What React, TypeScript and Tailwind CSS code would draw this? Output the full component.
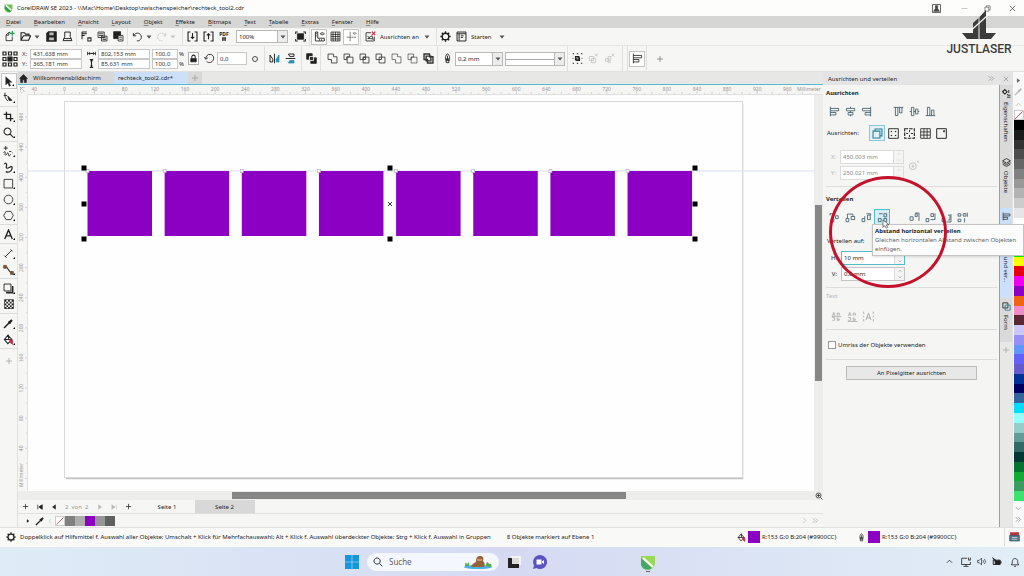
import { ReactNode } from 'react';
import clsx from 'clsx';

const PURPLE = '#8c00c4';

const menus = ['Datei', 'Bearbeiten', 'Ansicht', 'Layout', 'Objekt', 'Effekte', 'Bitmaps', 'Text', 'Tabelle', 'Extras', 'Fenster', 'Hilfe'];

const palette = [
  '#000000', '#1a1a1a', '#333333', '#4d4d4d', '#666666', '#808080', '#999999', '#b3b3b3', '#cccccc', '#e6e6e6',
  '#ffffff', '#0000ff', '#00ffff', '#00ff00', '#ffff00', '#e60012', '#f000f0', '#8c00c4', '#f06414', '#f08cc8',
  '#5a2832', '#ccc8fa', '#9690f5', '#6496fa', '#6460fa', '#645ccd', '#003296', '#00005f', '#32649b', '#00dcfa',
  '#96fffa', '#96cdc8', '#649b96', '#326964', '#003732', '#057332', '#12aa37', '#3c9b64', '#3ce16e',
];

const docPalette = ['#808080', '#adadad', PURPLE, '#969696', '#606060'];

// All glyphs are drawn on a 16 x 16 grid
const glyphs: Record<string, ReactNode> = {
  new: (
    <>
      <path d="M9 2H7L3 6v8h9V8M7 2v4H3" />
      <path d="M12 0v7M8.500 3.500h7" stroke="#1da04a" strokeWidth="1.800" />
    </>
  ),
  open: <path d="M1.500 13.500V2.500h5l1.500 2h5v2.500M1.500 13.500L5 7h10.500l-3 6.500z" strokeWidth="1.600" />,
  save: (
    <>
      <path d="M1 3l2-2h12v14H1z" fill="currentColor" />
      <path d="M5 2h6v4H5zM4.500 9.500h7v4h-7z" fill="#bbb" stroke="none" />
    </>
  ),
  print: <path d="M4 8V1.500h8V8M4 8l-2.500 6h13L12 8M3 11h10" strokeWidth="1.400" />,
  cut: <path d="M1.500 1.500h7M1.500 4h7M1.500 6.500h4M1.500 1v11M10 10h4.500v4.500H10z" strokeWidth="1.500" />,
  copy: <path d="M1.500 1.500h9v8h-9zM3 4h6M3 6.500h6M6.500 7.500h8v7h-8zM8 10h5M8 12.500h5" />,
  paste: (
    <>
      <path d="M1 1h10v10H1z" fill="currentColor" />
      <path d="M7.500 6.500h7v8h-7z" fill="#fff" />
      <path d="M9 9h4M9 12h4" />
    </>
  ),
  undo: <path d="M2 3v4h4M2 7c2-3.500 6-5 9-3 3.500 2.500 3.500 7 0 9.500-1.500 1-3 1-4 .5" strokeWidth="1.300" />,
  redo: <path d="M14 3v4h-4M14 7C12 3.500 8 2 5 4c-3.500 2.500-3.500 7 0 9.500 1.500 1 3 1 4 .5" strokeWidth="1.300" strokeDasharray="3 1" />,
  import: <path d="M5 1.500H1.500v13H5M11 1.500h3.500v13H11M8 3v8M5.500 8.500L8 11l2.500-2.500" strokeWidth="1.600" />,
  export: <path d="M5 1.500H1.500v13H5M11 1.500h3.500v13H11M8 12V4M5.500 6.500L8 4l2.500 2.500" strokeWidth="1.600" />,
  full: (
    <>
      <path d="M3.500 4h9v8h-9z" fill="currentColor" />
      <path d="M1 4.500V1.500h3M12 1.500h3v3M15 11.500v3h-3M4 14.500H1v-3" strokeWidth="1.500" />
    </>
  ),
  rulers: <path d="M2 1.500h3.500v9H15v4H2zM2 4h2M2 7h2M8 14v-2M11 14v-2M9 4c2-2 4-2 6 0-2 2-4 2-6 0z" strokeWidth="1.300" />,
  grid: <path d="M1.500 1.500h13v13h-13zM4.500 1.500v13M8 1.500v13M11.500 1.500v13M1.500 5h13M1.500 8h13M1.500 11.500h13" strokeWidth="1.100" />,
  guides: <path d="M6 1v14M1 9h14M10 3.500c1.500-1.500 3.500-1.500 5 0-1.500 1.500-3.500 1.500-5 0z" strokeWidth=".9" strokeDasharray="3 .6" />,
  snapOff: (
    <>
      <path d="M9 2.500H1.500v12h12V8M3.500 7l3 3M4 11l6-4 2 5-4-1z" />
      <path d="M10 1l5 5M15 1l-5 5" stroke="#d21c3c" strokeWidth="1.500" />
    </>
  ),
  gear: (
    <>
      <circle cx="8" cy="8" r="4.800" strokeWidth="2" />
      <path d="M8 .5v3M8 12.500v3M.5 8h3M12.500 8h3M2.700 2.700l2 2M11.300 11.300l2 2M2.700 13.300l2-2M11.300 4.700l2-2" strokeWidth="2" />
    </>
  ),
  launch: <path d="M1.500 1.500h13v13h-13zM1.500 4h13M4.500 4v10M7 7h4M7 9.500h3" strokeWidth="1.400" />,
  origin: (
    <>
      <path d="M1 1h3v3H1zM6.500 1h3v3h-3zM12 1h3v3h-3zM1 6.500h3v3H1zM12 6.500h3v3h-3zM1 12h3v3H1zM6.500 12h3v3h-3zM12 12h3v3h-3z" />
      <path d="M6 6h4v4H6z" fill="currentColor" />
    </>
  ),
  width: <path d="M1 5v6M15 5v6M2 8h12M4.500 5.500v5M11.500 5.500v5M7 7v2M9 7v2" strokeWidth="1.500" />,
  height: <path d="M5 1h6M5 15h6M8 1v14M6 3.500h4M6 12.500h4" strokeWidth="2" />,
  lock: (
    <>
      <path d="M5 8V5a3 3 0 0 1 6 0v3" strokeWidth="1.800" />
      <path d="M3 8h10v6H3z" fill="currentColor" />
    </>
  ),
  rotate: <path d="M4 12.500C7 15 12 14 13.500 10S13 2.500 9 2 3 5 2.500 8M.5 6l2 3 3-2" strokeWidth="1.300" />,
  circle: <circle cx="8" cy="8" r="5" strokeWidth="1.600" />,
  mirrorH: (
    <>
      <path d="M1.500 3v10h4V9zM8 1v14" strokeWidth="1.400" />
      <path d="M14.500 3v10h-4V9z" fill="#2b93ae" stroke="#2b93ae" />
    </>
  ),
  mirrorV: (
    <>
      <path d="M5 1.500h8v3.500H7zM1 8h14" strokeWidth="1.400" />
      <path d="M5 14.500h8V11H7z" fill="#2b93ae" stroke="#2b93ae" />
    </>
  ),
  order: (
    <>
      <path d="M1 1h8v8H1z" fill="currentColor" />
      <path d="M7 7h8v8H7z" fill="currentColor" />
      <path d="M5 5h6v6H5z" fill="#333" stroke="#fff" />
    </>
  ),
  weld: <path d="M1.500 1.500h8v4h5v9h-8v-5h-5z" />,
  trim: <path d="M1.500 1.500h8v4h-4v4h-4zM6 6h8.500v8.500H6z" />,
  intersect: <path d="M9.500 6V1.500h-8v8H6M6 6h8.500v8.500H6zM6 6h3.500v3.500H6z" />,
  simplify: <path d="M1.500 1.500h8v8h-8zM6 6h8.500v8.500H6z" />,
  front: <path d="M1.500 1.500h8v4h5v9h-8v-5h-5z" strokeWidth=".9" />,
  back: <path d="M1.500 1.500h8V6H6v3.500H1.500zM6 6h8.500v8.500H6z" strokeWidth=".9" />,
  boundary: <path d="M1.500 1.500h8v4h5v9h-8v-5h-5zM4.500 4.500h7v7h-7z" strokeWidth="2" />,
  pen: <path d="M8 1c3 3 3.500 5 2.500 8h-5C4.500 6 5 4 8 1zM5.500 9h5v2h-5zM6 11v3h4v-3M8 4v5" strokeWidth="1.300" />,
  wrap: (
    <>
      <path d="M5 5h5v5H5zM7 7h4v4H7z" strokeWidth="1.500" />
      <path d="M1 1h2M7 1h2M13 1h2M1 15h2M7 15h2M13 15h2M1 8h1M14 8h1" strokeWidth="1.500" />
    </>
  ),
  ungroup: <path d="M2 5h6v6H2zM5 8h6v6H5zM10 1l4 4M14 1l-4 4" />,
  ungroupAll: <path d="M2 8h4v4H2zM6 5h4v4H6zM6 11h3v3H6zM11 1l4 4M15 1l-4 4" />,
  plus: <path d="M8 2v12M2 8h12" strokeWidth="1.700" />,
  alignL: <path d="M2 1v14M2 3.500h12v3.500H2M2 9.500h8V13H2" />,
  alignC: <path d="M2 3.500h12V7H2zM4.500 9.500h7V13h-7zM8 1v2M8 7v2.500M8 13v2" />,
  alignR: <path d="M14 1v14M14 3.500H2V7h12M14 9.500H6V13h8" />,
  alignT: <path d="M1 2h14M3.500 2v12H7V2M9.500 2v8H13V2" />,
  alignM: <path d="M3.500 2v12H7V2zM9.500 4.500v7H13v-7zM1 8h2M7 8h2.500M13 8h2" />,
  alignB: <path d="M1 14h14M3.500 14V2H7v12M9.500 14V6H13v8" />,
  toObjects: <path d="M1.500 4.500h10v10h-10zM4.500 4.500v-3h10v10h-3" strokeWidth="1.600" />,
  toPage: <path d="M1 1h14v14H1zM5 4.500V6M11 4.500V6M5 10v1.500M11 10v1.500M4 5h2M10 5h2M4 11h2M10 11h2" strokeWidth="1.300" />,
  toCenter: (
    <>
      <path d="M1 1h14v14H1z" strokeWidth="1.600" strokeDasharray="5 1.500" />
      <path d="M8 3v3M8 13v-3M3 8h3M13 8h-3" strokeWidth="1.300" />
    </>
  ),
  toGrid: <path d="M1 1h14v14H1zM5.700 1v14M10.300 1v14M1 5.700h14M1 10.300h14" strokeWidth="1.200" />,
  toPoint: <path d="M1 1h14v14H1zM11 4h1.500v1.500H11z" strokeWidth="1.400" />,
  target: (
    <>
      <circle cx="7" cy="9" r="5" />
      <path d="M7 7v4M5 9h4M13 2h2v2" />
    </>
  ),
  dist1: <path d="M1.500 2v3M1.500 2.500h7M3 10h4v4H3zM9.500 5.500h4v4h-4z" />,
  dist2: <path d="M1.500 9.500h4V14h-4zM3.500 9V3h8v3M9 6.500h5V11H9z" />,
  dist3: <path d="M1.500 9.500h4V14h-4zM9.500 4.500h4V11h-4zM5.500 9V6M8 2.500h6V5" />,
  dist4: <path d="M2 9.500h4V14H2zM10 9.500h4V14h-4zM10 2.500h4V7h-4zM3 2.500h5" />,
  dist5: <path d="M1.500 7h4.500v5H1.500zM9 2.500h3v4H9zM14.500 1.500V13M9 1.500h5.500" />,
  dist6: <path d="M1.500 9.500h4V14h-4zM8.500 2.500h4v4h-4zM14.500 2v9M8 11h6.500" />,
  dist7: <path d="M1.500 9.500h4V14h-4zM10 4.500h3v7h-3M14.500 3v11.500M8 14.500h6.500" />,
  dist8: <path d="M1.500 2.500h4V6h-4zM9 2.500h4V6H9zM15 1v6M1.500 10.500h4V14h-4zM11 9v6" />,
  pick: <path d="M4 1v12l3-3 2 5 2-1-2-5h4z" fill="currentColor" strokeWidth=".6" />,
  shape: (
    <>
      <path d="M3 1c-1 5 0 8 4 12M1 5h5" strokeWidth="1.300" />
      <path d="M7 6l6 6-4 .5z" fill="currentColor" />
    </>
  ),
  crop: <path d="M5 1v10h10M1 5h10v10" strokeWidth="1.900" />,
  zoom: <path d="M6.500 1.500a5 5 0 1 0 .1 0M10 10l5 5" strokeWidth="1.500" />,
  freehand: <path d="M4 0v6M1 3h6M1 10c1-3 3-2 2 1s2 3 3 0 2 0 2 2 2 2 3-1M9 8h3M13 10h1" strokeWidth="1.300" />,
  artistic: <path d="M2 3c2-3 4 0 3 3s1 4 4 2 5-2 4 2-5 6-9 4" strokeWidth="1.700" />,
  rect: <path d="M1.500 2h12.500v12.500H1.500z" strokeWidth="1.200" />,
  ellipse: <circle cx="8" cy="8" r="6.300" strokeWidth="1.200" />,
  polygon: <path d="M4.500 2h7L15 8l-3.500 6h-7L1 8z" strokeWidth="1.200" />,
  text: <path d="M2.500 14.500L8 1.500l5.500 13M4.500 10h7" strokeWidth="2" />,
  line: <path d="M3 13L13 3M2 11l3 3M11 2l3 3" strokeWidth="1.300" />,
  connector: (
    <>
      <path d="M3 4c6 0 4 8 10 9" strokeWidth="1.500" />
      <path d="M1 2h4v4H1zM11 11h4v4h-4z" fill="#8a5a3c" stroke="#5a4632" />
    </>
  ),
  shadow: (
    <>
      <path d="M4.500 14h9.500v-9.500" strokeWidth="2.400" />
      <path d="M1.500 1.500h10v10h-10z" fill="#f6f6f6" strokeWidth="1.300" />
    </>
  ),
  transparency: (
    <>
      <path d="M1 1h14v14H1z" fill="#fff" />
      <path d="M1 3h14M1 8.500h14M1 14h14" strokeWidth="2.800" strokeDasharray="2.800 2.800" />
      <path d="M3.800 5.700h11M3.800 11.300h11" strokeWidth="2.800" strokeDasharray="2.800 2.800" />
    </>
  ),
  dropper: (
    <>
      <path d="M1.500 14.500L9 7" strokeWidth="2.200" />
      <path d="M8 5l3 3M10 6l3-3" strokeWidth="3.200" />
    </>
  ),
  bucket: (
    <>
      <path d="M7 2l6 6-6 6-5-6zM2 8h10M8 1v6" strokeWidth="1.500" />
      <path d="M10 8l4 1v6l-4-3z" fill="#c03048" stroke="#c03048" />
    </>
  ),
  none: <path d="M1 15L15 1" stroke="#c04058" strokeWidth="1.600" />,
  home: <path d="M1 8l7-7 7 7h-2v7H9.500v-5h-3v5H3V8z" fill="currentColor" />,
  corner: <path d="M3 3h9M3 3v8M3 3l9 9M6 13l3-3" strokeDasharray="2 1" />,
  layers: <path d="M8 1l7 4-7 4-7-4zM1 8l7 4 7-4M1 11l7 4 7-4" strokeWidth="1.500" />,
  props: (
    <>
      <path d="M5 1l4 4-4 4-4-4z" strokeWidth="2" />
      <path d="M9 9l2 2M9 14.500h6M10 11h5M12 2v5" strokeWidth="1.700" />
    </>
  ),
  form: (
    <>
      <path d="M1.500 1.500h9v9h-9z" strokeWidth="1.500" />
      <path d="M5.500 5.500h9v9h-9z" stroke="#2b7f96" strokeWidth="1.500" />
    </>
  ),
  fit: (
    <>
      <circle cx="7" cy="7" r="5" strokeWidth="1.500" />
      <path d="M4 7h6M7 4v6M11 11l4 4" strokeWidth="1.500" />
    </>
  ),
  textFirst: <path d="M2 7l2-5 2 5M3 5.500h2M9 7V3h3v4M2 9.500h3v4H2M9 9.500v4h3v-2H9M1 8.200h14" />,
  textLast: <path d="M2 7l2-5 2 5M3 5.500h2M9 7V3h3v4M2 9.500h3v4H2M9 9.500v4h3v-2H9M1 15.200h14" />,
  textBox: <path d="M4.500 13L8 3l3.500 10M5.500 10h5M1 1v3M1 7v2M1 12v3M15 1v3M15 7v2M15 12v3" strokeWidth="1.400" />,
  first: <path d="M2 2v12M14 2L5 8l9 6zM10 4v8" fill="currentColor" strokeWidth="2" />,
  prev: <path d="M12 2L4 8l8 6z" fill="currentColor" />,
  next: <path d="M4 2l8 6-8 6z" fill="currentColor" />,
  last: <path d="M14 2v12M2 2l9 6-9 6z" fill="currentColor" strokeWidth="1.300" />,
  chevL: <path d="M11 2L5 8l6 6" strokeWidth="1.500" />,
  chevR: <path d="M5 2l6 6-6 6" strokeWidth="1.500" />,
  chevRR: <path d="M2 3l5 5-5 5M8 3l5 5-5 5" strokeWidth="1.800" />,
  chevU: <path d="M2 11l6-6 6 6" strokeWidth="1.800" />,
  chevD: <path d="M2 5l6 6 6-6" strokeWidth="1.800" />,
  account: (
    <>
      <path d="M1 1h14v14H1z" strokeWidth="1.500" />
      <path d="M6 3h4v5l3 5H3l3-5z" fill="currentColor" />
    </>
  ),
  min: <path d="M1 8h14" />,
  restore: <path d="M2 5h9v9H2zM5 5V2h9v9h-3" strokeWidth="1.300" />,
  close: <path d="M2 2l12 12M14 2L2 14" strokeWidth="1.600" />,
  monitor: <path d="M10 2H1v10h14V8M4 15h8M8 12v3M12 1v4h3V1" strokeWidth="1.300" />,
  volume: <path d="M1 6h3l4-4v12l-4-4H1zM10.500 5.500c1.500 1.500 1.500 3.500 0 5M13 3.500c2.500 2.500 2.500 6.500 0 9" strokeWidth="1.200" />,
  battery: (
    <>
      <path d="M2 5h11v7H2zM14.500 7v3" strokeWidth="1.500" />
      <path d="M5 6h8v5H5zM1 1l3 5h3z" fill="currentColor" />
    </>
  ),
  bell: <path d="M2 12.500c2-2 1.500-4 2-7 .8-4 7.200-4 8 0 .5 3 0 5 2 7zM6.500 15h3" strokeWidth="1.300" />,
  proof: (
    <>
      <path d="M2 1h12v9H2z" fill="#b83242" stroke="#b83242" />
      <path d="M1 5h14v8H1z" fill="#4a7c8c" stroke="#3c5c68" />
      <path d="M4 8h8M4 10.500h8" stroke="#e8c8c8" />
    </>
  ),
};

function Icon({ name, className }: { name: string; className?: string }) {
  return (
    <svg viewBox="0 0 16 16" fill="none" stroke="currentColor" strokeWidth="1.200" className={clsx('shrink-0', className || 'size-[11px]')}>
      {glyphs[name]}
    </svg>
  );
}

function Tool({ icon, label, boxed, dim, size }: { icon: string; label: string; boxed?: boolean; dim?: boolean; size?: string }) {
  return (
    <button
      aria-label={label}
      className={clsx(
        'flex h-4 w-4 shrink-0 items-center justify-center',
        boxed && 'border border-[#c4c4c4] bg-white',
        dim && 'text-[#c4c4c4]'
      )}
    >
      <Icon name={icon} className={size} />
    </button>
  );
}

function Caret({ dim }: { dim?: boolean }) {
  return (
    <svg viewBox="0 0 8 8" className={clsx('size-2 shrink-0', dim ? 'text-[#c4c4c4]' : 'text-[#555]')}>
      <path d="M1.500 2.500h5L4 5.500z" fill="currentColor" />
    </svg>
  );
}

function Sep() {
  return <div className="mx-px w-px shrink-0 self-stretch bg-[#e0e0e0]" />;
}

function Field({ label, value, className }: { label: string; value: string; className: string }) {
  return (
    <input
      aria-label={label}
      defaultValue={value}
      className={clsx('border border-[#c8c8c8] bg-white px-0.5 text-[#333] outline-none', className)}
    />
  );
}

function Dropdown({ label, value, className }: { label: string; value: string; className: string }) {
  return (
    <div className={clsx('relative flex shrink-0 border border-[#b8b8b8] bg-white', className)}>
      <select aria-label={label} className="h-full w-full appearance-none pl-0.5 outline-none">
        <option>{value}</option>
      </select>
      <div className="pointer-events-none absolute inset-y-0 right-0 flex w-[10px] items-center justify-center border-l border-[#b8b8b8] bg-[#ececec]">
        <Caret />
      </div>
      {!value && <div className="pointer-events-none absolute top-1/2 left-0 right-[10px] h-px bg-[#aaa]" />}
    </div>
  );
}

function TitleBar() {
  return (
    <header className="flex h-4 items-center bg-[#fdfdfc] pr-2 pl-1">
      <svg viewBox="0 0 16 16" className="size-[9px]">
        <path d="M1 1h14v7c0 4-3 7-7 7s-7-3-7-7z" fill="#6cc24a" />
        <path d="M2 2l11 10-3 3L1 8z" fill="#2f9e4a" />
        <path d="M3 2l10 9" stroke="#fff" strokeWidth="2.500" />
      </svg>
      <h1 className="ml-1 flex-1">CorelDRAW SE 2023 - \\Mac\Home\Desktop\zwischenspeicher\rechteck_tool2.cdr</h1>
      <div className="flex items-center gap-4 text-[#444]">
        <button aria-label="Konto"><Icon name="account" className="size-[9px]" /></button>
        <button aria-label="Minimieren" className="ml-1"><Icon name="min" className="size-[7px] text-[#999]" /></button>
        <button aria-label="Wiederherstellen"><Icon name="restore" className="size-[7px]" /></button>
        <button aria-label="Schließen" className="ml-0.5"><Icon name="close" className="size-[7px]" /></button>
      </div>
    </header>
  );
}

function MenuBar() {
  return (
    <nav className="flex h-3 items-center gap-[13px] bg-[#d6d6d5] pl-[6px]">
      {menus.map((m) => (
        <button key={m}>
          <span className="underline decoration-[#888]">{m[0]}</span>
          {m.slice(1)}
        </button>
      ))}
    </nav>
  );
}

function StandardBar() {
  return (
    <div className="flex h-[18px] items-center border-b border-[#e6e6e6] pl-px">
      <Tool icon="new" label="Neu" />
      <Tool icon="open" label="Öffnen" />
      <Caret />
      <div className="ml-0.5 flex">
        <Tool icon="save" label="Speichern" />
        <Tool icon="print" label="Drucken" />
      </div>
      <Sep />
      <Tool icon="cut" label="Ausschneiden" />
      <Tool icon="copy" label="Kopieren" />
      <Tool icon="paste" label="Einfügen" />
      <Sep />
      <Tool icon="undo" label="Rückgängig" />
      <Caret />
      <Tool icon="redo" label="Wiederholen" dim />
      <Caret dim />
      <div className="w-1" />
      <Sep />
      <Tool icon="import" label="Importieren" />
      <Tool icon="export" label="Exportieren" />
      <button aria-label="Als PDF veröffentlichen" className="flex w-4 flex-col items-center">
        <span className="text-[5px] leading-[5px] font-bold">PDF</span>
        <Icon name="save" className="size-[4px]" />
      </button>
      <Dropdown label="Zoomfaktor" value="100%" className="mx-1 h-[13px] w-[52px]" />
      <Tool icon="full" label="Ganzseitenvorschau" />
      <Sep />
      <Tool icon="rulers" label="Lineale" boxed />
      <Tool icon="grid" label="Gitter" />
      <Tool icon="guides" label="Hilfslinien" boxed />
      <Sep />
      <Tool icon="snapOff" label="Ausrichten deaktivieren" />
      <button className="ml-0.5 flex items-center gap-1">Ausrichten an <Caret /></button>
      <div className="w-1" />
      <Sep />
      <Tool icon="gear" label="Optionen" />
      <button className="ml-0.5 flex items-center gap-1">
        <Icon name="launch" /> Starten <span className="ml-0.5"><Caret /></span>
      </button>
    </div>
  );
}

function PropertyBar() {
  return (
    <div className="flex h-[26px] items-center border-b border-[#e0e0e0] pl-[2px]">
      <Icon name="origin" className="size-[16px]" />
      <div className="ml-1 flex flex-col text-[#444]">
        {[['X:', '431,638 mm'], ['Y:', '365,181 mm']].map(([l, v]) => (
          <label key={l} className="flex h-[10px] items-center gap-px">
            <span className="w-[7px]">{l}</span>
            <Field label={l} value={v} className="h-[10px] w-[52px]" />
          </label>
        ))}
      </div>
      <div className="ml-[5px] flex flex-col">
        <div className="flex h-[10px] items-center gap-0.5"><Icon name="width" className="size-[9px]" /><Field label="Breite" value="802,153 mm" className="h-[10px] w-[52px]" /></div>
        <div className="flex h-[10px] items-center gap-0.5"><Icon name="height" className="size-[9px]" /><Field label="Höhe" value="85,631 mm" className="h-[10px] w-[52px]" /></div>
      </div>
      <div className="ml-[2px] flex flex-col">
        {['Skalierung X', 'Skalierung Y'].map((l) => (
          <div key={l} className="flex h-[10px] items-center gap-px"><Field label={l} value="100,0" className="h-[10px] w-[26px]" />%</div>
        ))}
      </div>
      <button aria-label="Seitenverhältnis sperren" className="ml-1 flex h-[13px] w-[11px] items-center justify-center border border-[#b0b0b0] bg-white">
        <Icon name="lock" className="size-[9px]" />
      </button>
      <div className="ml-0.5 flex items-center">
        <Tool icon="rotate" label="Drehen" />
        <Field label="Drehwinkel" value="0,0" className="h-[13px] w-[30px]" />
        <Tool icon="circle" label="Winkel" size="size-[8px]" />
      </div>
      <Sep />
      <div className="flex"><Tool icon="mirrorH" label="Horizontal spiegeln" /><Tool icon="mirrorV" label="Vertikal spiegeln" /></div>
      <div className="w-0.5" />
      <Sep />
      <Tool icon="order" label="Reihenfolge" />
      <Sep />
      <div className="flex pl-0.5 text-[#333]">
        <Tool icon="weld" label="Verschmelzen" />
        <Tool icon="trim" label="Zuschneiden" />
        <Tool icon="intersect" label="Schnittmenge" />
        <Tool icon="simplify" label="Vereinfachen" />
        <Tool icon="front" label="Vorderobjekt ohne Hinterobjekt" />
        <Tool icon="back" label="Hinterobjekt ohne Vorderobjekt" />
        <Tool icon="boundary" label="Begrenzung" />
      </div>
      <Sep />
      <Tool icon="pen" label="Umriss" />
      <Dropdown label="Umrissbreite" value="0,2 mm" className="h-[14px] w-[48px]" />
      <Dropdown label="Linienstil" value="" className="ml-0.5 h-[14px] w-[60px]" />
      <div className="w-px" />
      <Sep />
      <Tool icon="wrap" label="Gruppieren" />
      <Tool icon="ungroup" label="Gruppierung aufheben" dim />
      <Tool icon="ungroupAll" label="Alle Gruppierungen aufheben" dim />
      <div className="w-1" />
      <Sep />
      <div className="w-0.5" />
      <Sep />
      <Tool icon="alignL" label="Ausrichten und verteilen" boxed />
      <Sep />
      <div className="ml-1 text-[#888]"><Tool icon="plus" label="Anpassen" size="size-[8px]" /></div>
    </div>
  );
}

const toolGroups = [
  ['pick', 'shape'],
  ['crop', 'zoom'],
  ['freehand', 'artistic', 'rect', 'ellipse', 'polygon'],
  ['text'],
  ['line', 'connector'],
  ['shadow', 'transparency'],
  ['dropper', 'bucket'],
  ['plus'],
];

function Toolbox() {
  return (
    <aside className="flex w-[18px] shrink-0 flex-col border-r border-[#e0e0e0]">
      {toolGroups.map((group, i) => (
        <div key={i} className="flex flex-col items-center border-b border-[#dcdcdc] pt-px pb-px last:border-0 last:pt-1">
          {group.map((t) => (
            <button
              key={t}
              aria-label={t}
              className={clsx(
                'relative flex h-4 w-4 items-center justify-center',
                t === 'pick' && 'border border-[#c4c4c4] bg-white',
                t === 'plus' && 'text-[#aaa]'
              )}
            >
              <Icon name={t} className={t === 'plus' ? 'size-[8px]' : t === 'transparency' ? 'size-[10px]' : 'size-[11px]'} />
              {t !== 'plus' && t !== 'transparency' && (
                <svg viewBox="0 0 4 4" className="absolute right-0.5 bottom-0.5 size-[2px]"><path d="M4 0v4H0z" /></svg>
              )}
            </button>
          ))}
        </div>
      ))}
    </aside>
  );
}

const SCALE = 30.12;

function HorizontalRuler() {
  const marks = Array.from({ length: 26 }, (_, i) => i - 1);
  return (
    <svg className="h-[10px] min-w-0 flex-1" fill="#999" stroke="none">
      {marks.map((m) => {
        const x = 36.5 + m * SCALE;
        return (
          <g key={m}>
            <path d={`M${x} 6v4M${x + 7.5} 8v2M${x + 15} 7v3M${x + 22.5} 8v2`} stroke="#d4d4d4" />
            {m < 25 && <text x={x} y="6" fontSize="5" textAnchor="middle">{Math.abs(m * 40)}</text>}
          </g>
        );
      })}
      <text x="769" y="6" fontSize="5">Millimeter</text>
      <path d="M0 9.500h795" stroke="#e0e0e0" />
    </svg>
  );
}

function VerticalRuler() {
  const marks = Array.from({ length: 13 }, (_, i) => i);
  return (
    <svg className="w-[10px] shrink-0" fill="#999" stroke="none">
      {marks.map((m) => {
        const y = 22 + m * SCALE;
        return (
          <g key={m}>
            <path d={`M7 ${y}h3M8 ${y + 15}h2`} stroke="#d4d4d4" />
            {m < 12 && <text transform={`translate(5 ${y}) rotate(-90)`} fontSize="5" textAnchor="middle">{480 - m * 40}</text>}
          </g>
        );
      })}
      <text transform="translate(5 380) rotate(-90)" fontSize="5" textAnchor="middle">Millimeter</text>
      <path d="M9.500 0v395" stroke="#e0e0e0" />
    </svg>
  );
}

function Drawing() {
  const squares = Array.from({ length: 8 }, (_, i) => 59.5 + i * 77.15);
  const handles = [[56, 73], [362, 73], [667, 73], [56, 109], [667, 109], [56, 144], [362, 144], [667, 144]];
  return (
    <svg className="min-w-0 flex-1 bg-[#fefefe]">
      <path d="M38 383.500h677M714.500 9v375" stroke="#c4c4c4" strokeWidth="1.500" fill="none" />
      <rect x="36.500" y="6.500" width="678" height="376" fill="#fefefe" stroke="#d8d8d8" />
      <path d="M0 76h786" stroke="#dadff0" />
      {squares.map((x) => (
        <g key={x}>
          <rect x={x} y="76" width="64.500" height="65" fill={PURPLE} />
          <rect x={x - 1.5} y="74.500" width="3" height="3" fill="#fff" stroke="#b4aac8" strokeWidth=".7" />
        </g>
      ))}
      {handles.map(([x, y]) => (
        <rect key={`${x}-${y}`} x={x - 2.5} y={y - 2.5} width="5" height="5" fill="#000" />
      ))}
      <path d="M360 107l4 4M364 107l-4 4" stroke="#000" strokeWidth=".8" />
    </svg>
  );
}

function Document() {
  return (
    <main className="flex min-w-0 flex-1 flex-col">
      <div className="flex h-3 items-stretch bg-[#e7e7e6]">
        <button aria-label="Start" className="flex w-[11px] items-center justify-center bg-[#d8d8d8]"><Icon name="home" className="size-[9px]" /></button>
        <button className="w-[85px] bg-[#d8d8d8] pl-1 text-left">Willkommensbildschirm</button>
        <button className="w-[74px] bg-[#cce0fa] pl-1 text-left">rechteck_tool2.cdr*</button>
        <button aria-label="Neue Registerkarte" className="flex w-[14px] items-center justify-center bg-[#d8d8d8] text-[#a0a0a0]"><Icon name="plus" className="size-[8px]" /></button>
      </div>
      <div className="flex h-[11px] border-t border-[#56bccb] bg-[#f5f5f4]">
        <div className="flex w-[10px] items-center justify-center text-[#888]"><Icon name="corner" className="size-[8px]" /></div>
        <HorizontalRuler />
      </div>
      <div className="flex min-h-0 flex-1">
        <VerticalRuler />
        <Drawing />
        <div className="w-[9px] bg-[#ededec] px-px pt-[110px]">
          <div className="h-[176px] bg-[#868686]" />
        </div>
      </div>
      <div className="flex h-[9px] items-center bg-[#ededec] pl-[214px]">
        <div className="h-[7px] w-2/3 bg-[#868686]" />
        <button aria-label="Navigator" className="ml-auto"><Icon name="fit" className="size-[8px]" /></button>
      </div>
      <div className="flex h-[14px] items-center gap-2 border-b border-[#e0e0e0] pl-1">
        <button aria-label="Seite davor einfügen"><Icon name="plus" className="size-[7px]" /></button>
        <button aria-label="Erste Seite"><Icon name="first" className="size-[6px]" /></button>
        <button aria-label="Vorherige Seite"><Icon name="prev" className="size-[6px]" /></button>
        <span className="text-[#999]">2 &nbsp;von&nbsp; 2</span>
        <button aria-label="Nächste Seite" className="text-[#b8b8b8]"><Icon name="next" className="size-[6px]" /></button>
        <button aria-label="Letzte Seite" className="text-[#b8b8b8]"><Icon name="last" className="size-[6px]" /></button>
        <button aria-label="Seite danach einfügen"><Icon name="plus" className="size-[7px]" /></button>
        <div className="flex self-stretch">
          <button className="w-[55px]">Seite 1</button>
          <button className="w-[60px] bg-[#d8d8d8]">Seite 2</button>
        </div>
      </div>
      <div className="flex h-[13px] items-center pr-1 pl-2">
        <Icon name="next" className="size-[4px]" />
        <button aria-label="Pipette" className="ml-[5px]"><Icon name="dropper" className="size-[10px]" /></button>
        <Icon name="chevL" className="ml-0.5 size-[6px] text-[#bbb]" />
        <div className="ml-0.5 flex">
          <div className="flex size-[10px] items-center justify-center border border-[#ccc] bg-white"><Icon name="none" className="size-[8px]" /></div>
          {docPalette.map((c) => (
            <button key={c} aria-label={c} className="size-[10px]" style={{ backgroundColor: c }} />
          ))}
        </div>
        <div className="ml-auto flex gap-1 text-[#b0b0b0]"><Icon name="chevR" className="size-[7px]" /><Icon name="chevRR" className="size-[7px]" /></div>
      </div>
    </main>
  );
}

function Spin({ label, value, dim, active }: { label: string; value: string; dim?: boolean; active?: boolean }) {
  return (
    <label className={clsx('flex h-[14px] items-center gap-1', dim && 'text-[#b4b4b4]')}>
      <span className="w-2 text-right">{label}</span>
      <span className={clsx('flex h-full w-[64px] border bg-white', active ? 'border-[#56bccb]' : dim ? 'border-[#dcdcdc]' : 'border-[#c4c4c4]')}>
        <input defaultValue={value} className={clsx('min-w-0 flex-1 px-0.5 outline-none', dim && 'text-[#888]')} />
        <span className={clsx('flex w-[10px] flex-col items-center justify-around border-l border-[#dcdcdc] bg-[#f4f4f4]', dim ? 'text-[#c8c8c8]' : 'text-[#777]')}>
          <Icon name="chevU" className="size-[4px]" />
          <Icon name="chevD" className="size-[4px]" />
        </span>
      </span>
    </label>
  );
}

function Docker() {
  const distribute = ['dist1', 'dist2', 'dist3', 'dist4'];
  return (
    <section className="flex w-[176px] shrink-0 flex-col bg-[#f5f5f4]">
      <div className="flex h-[13px] items-center bg-[#e4e4e4] px-1">
        <h2 className="flex-1 pl-px">Ausrichten und verteilen</h2>
        <button aria-label="Reduzieren" className="text-[#999]"><Icon name="chevRR" className="size-[7px]" /></button>
      </div>
      <div className="flex flex-col pr-0.5 pl-[3px]">
        <h3 className="mt-1 h-2 leading-2 font-bold">Ausrichten</h3>
        <div className="mt-1.5 flex text-[#3c5a66]">
          <Tool icon="alignL" label="Links ausrichten" />
          <Tool icon="alignC" label="Horizontal zentrieren" />
          <Tool icon="alignR" label="Rechts ausrichten" />
          <div className="w-4" />
          <Tool icon="alignT" label="Oben ausrichten" />
          <Tool icon="alignM" label="Vertikal zentrieren" />
          <Tool icon="alignB" label="Unten ausrichten" />
        </div>
        <div className="mt-1.5 flex items-center">
          <span className="w-[43px] pl-px">Ausrichten:</span>
          <button aria-label="Aktive Objekte" className="flex size-4 items-center justify-center border border-[#8cc8dc] bg-[#e2f0f8] text-[#2b7f96]"><Icon name="toObjects" /></button>
          <Tool icon="toPage" label="Seitenrand" />
          <Tool icon="toCenter" label="Seitenmitte" />
          <Tool icon="toGrid" label="Gitter" />
          <Tool icon="toPoint" label="Bestimmter Punkt" />
        </div>
        <div className="mt-[9px] flex items-center gap-1 pl-0.5">
          <div className="flex flex-col gap-0.5">
            <Spin label="X:" value="450,003 mm" dim />
            <Spin label="Y:" value="250,021 mm" dim />
          </div>
          <Icon name="target" className="size-[11px] text-[#bbb]" />
        </div>
        <div className="mt-1.5 h-px bg-[#dedede]" />
        <h3 className="mt-2 h-2 leading-2 font-bold">Verteilen</h3>
        <div className="mt-1.5 flex text-[#3c5a66]">
          {distribute.map((d) => (
            <button key={d} aria-label={d} className={clsx('flex size-4 items-center justify-center', d === 'dist4' && 'border border-[#56bccb] bg-[#d4ecf4]')}>
              <Icon name={d} />
            </button>
          ))}
          <div className="w-4" />
          <Tool icon="dist5" label="Oben verteilen" />
          <Tool icon="dist6" label="Mitte verteilen" />
          <Tool icon="dist7" label="Unten verteilen" />
          <Tool icon="dist8" label="Abstand vertikal verteilen" />
        </div>
        <p className="mt-3 h-2 pl-px leading-2">Verteilen auf:</p>
        <div className="mt-1.5 flex flex-col gap-0.5 pl-[3px]">
          <Spin label="H:" value="10 mm" active />
          <Spin label="V:" value="0,0 mm" />
        </div>
        <div className="mt-1.5 h-px bg-[#dedede]" />
        <h3 className="mt-1 h-2 leading-2 text-[#b8b8b8]">Text</h3>
        <div className="mt-2 flex pl-0.5 text-[#aaa]">
          <Tool icon="textFirst" label="Erste Grundlinie" />
          <Tool icon="textLast" label="Letzte Grundlinie" />
          <Tool icon="textBox" label="Begrenzungsrahmen" />
        </div>
        <div className="mt-[5px] h-px bg-[#dedede]" />
        <label className="mt-[11px] flex h-2 items-center gap-0.5 pl-0.5">
          <input type="checkbox" className="size-2 appearance-none border border-[#999] bg-white" />
          Umriss der Objekte verwenden
        </label>
        <div className="mt-2.5 h-px bg-[#dedede]" />
        <button className="mx-5 mt-1.5 h-[14px] border border-[#bcbcbc] bg-[#e8e8e8]">An Pixelgitter ausrichten</button>
      </div>
    </section>
  );
}

function DockerTabs() {
  const tab = 'flex w-full flex-col items-center gap-1 pt-1 [writing-mode:horizontal-tb]';
  return (
    <aside className="flex w-[13px] shrink-0 flex-col bg-[#e8e8e7]">
      <button aria-label="Andockfenster schließen" className="flex h-[13px] items-center justify-center bg-[#e4e4e4] text-[#888]"><Icon name="close" className="size-[6px]" /></button>
      <div className="flex flex-1 flex-col border-l border-[#56bccb]">
        <button className={clsx(tab, 'h-[69px] bg-[#dadada]')}><Icon name="props" className="size-[9px]" /><span className="[writing-mode:vertical-rl]">Eigenschaften</span></button>
        <button className={clsx(tab, 'h-[54px] bg-[#dadada]')}><Icon name="layers" className="size-[9px]" /><span className="[writing-mode:vertical-rl]">Objekte</span></button>
        <button className={clsx(tab, 'h-[90px] bg-[#cce0fa]')}><Icon name="alignL" className="size-[9px]" /><span className="[writing-mode:vertical-rl]">Ausrichten und ver...</span></button>
        <button className={clsx(tab, 'h-[44px] bg-[#dadada]')}><Icon name="form" className="size-[9px]" /><span className="[writing-mode:vertical-rl]">Form</span></button>
        <button aria-label="Andockfenster hinzufügen" className="flex justify-center pt-1 text-[#aaa]"><Icon name="plus" className="size-[8px]" /></button>
      </div>
    </aside>
  );
}

function ColorBar() {
  return (
    <aside className="flex w-3 shrink-0 flex-col items-center border-l border-[#e0e0e0] bg-[#f8f8f8]">
      <div className="flex h-[38px] flex-col items-center justify-around pt-1 text-[#bbb]">
        <Icon name="next" className="size-[5px] text-[#555]" />
        <Icon name="dropper" className="size-[9px]" />
        <Icon name="chevU" className="size-[7px]" />
      </div>
      <div className="flex size-[10px] items-center justify-center border border-[#ccc] bg-white"><Icon name="none" className="size-[9px]" /></div>
      <div className="flex h-[381px] w-[10px] flex-col">
        {palette.map((c) => (
          <button key={c} aria-label={c} className="flex-1" style={{ backgroundColor: c }} />
        ))}
      </div>
      <div className="flex flex-1 flex-col items-center justify-evenly text-[#999]">
        <Icon name="chevD" className="size-[7px]" />
        <Icon name="chevRR" className="size-[7px]" />
      </div>
    </aside>
  );
}

function StatusBar() {
  return (
    <footer className="flex h-5 items-center border-t border-[#e0e0e0] bg-[#f9f9f8] pb-px pl-1.5">
      <Icon name="gear" className="size-[10px]" />
      <p className="ml-1 whitespace-nowrap">
        Doppelklick auf Hilfsmittel f. Auswahl aller Objekte; Umschalt + Klick für Mehrfachauswahl; Alt + Klick f. Auswahl überdeckter Objekte; Strg + Klick f. Auswahl in Gruppen
      </p>
      <p className="ml-4 whitespace-nowrap">8 Objekte markiert auf Ebene 1</p>
      <div className="ml-auto flex w-[120px] items-center gap-0.5">
        <Icon name="bucket" className="size-[9px]" />
        <span className="size-3 bg-[#8c00c4]" />
        <span>R:153 G:0 B:204 (#9900CC)</span>
      </div>
      <div className="flex w-[147px] items-center gap-0.5">
        <Icon name="pen" className="size-[9px]" />
        <span className="size-3 bg-[#8c00c4]" />
        <span>R:153 G:0 B:204 (#9900CC)</span>
      </div>
      <div className="flex w-5 justify-center self-stretch border-l border-[#dcdcdc]">
        <button aria-label="Farbproof"><Icon name="proof" className="size-[11px]" /></button>
      </div>
    </footer>
  );
}

function Taskbar() {
  return (
    <div className="flex h-[29px] items-center bg-linear-to-r from-[#dfecf7] via-[#d5daf2] via-50% to-[#e2eef7]">
      <div className="flex flex-[499] items-center justify-end">
        <button aria-label="Start" className="mr-2">
          <svg viewBox="0 0 14 14" className="size-[14px]" fill="#1496dc">
            <path d="M0 0h6.700v6.700H0zM7.300 0H14v6.700H7.300zM0 7.300h6.700V14H0zM7.300 7.300H14V14H7.300z" />
          </svg>
        </button>
        <label className="flex h-[18px] w-[132px] items-center rounded-full bg-[#f4f7fd] px-1.5">
          <Icon name="zoom" className="size-[10px]" />
          <input aria-label="Suche" placeholder="Suche" className="ml-1.5 w-0 flex-1 text-[8px] outline-none placeholder:text-[#666]" />
          <svg viewBox="0 0 30 14" className="h-[14px] w-[30px]">
            <ellipse cx="15" cy="12" rx="14" ry="2" fill="#4ab4e0" />
            <path d="M2 11c0-4 1-5 2-1 1-4 3-3 2 1M23 11c0-4 2-5 3-2 2-1 3 0 2 3" fill="#58a848" />
            <path d="M8 12c1-3 3-4 5-5 0-4 1-6 4-6s4 2 3 5c2 2 2 4 1 6z" fill="#96643c" />
            <path d="M14 4h5v2h-5z" fill="#c89668" />
          </svg>
        </label>
      </div>
      <div className="flex flex-[525] items-center">
        <button aria-label="Aktive Anwendungen" className="ml-2">
          <svg viewBox="0 0 14 14" className="size-[14px]">
            <path d="M4 1h10v9H4z" fill="#f4f4f4" />
            <path d="M1 3h4v6h7v4H1z" fill="#222" />
            <path d="M5 3h7v6H5z" fill="#dcdcdc" />
          </svg>
        </button>
        <button aria-label="Chat" className="ml-3">
          <svg viewBox="0 0 14 14" className="size-[14px]">
            <path d="M7 0a7 7 0 1 1-3.500 13L0 14l1-3.500A7 7 0 0 1 7 0z" fill="#5b54c0" />
            <path d="M3.500 4.500h5v5h-5zM9 6.500l2-1.500v4L9 7.500z" fill="#fff" />
          </svg>
        </button>
        <button aria-label="CorelDRAW" className="ml-[94px] flex flex-col items-center gap-px pt-1">
          <svg viewBox="0 0 14 14" className="size-[14px]">
            <path d="M0 0h14v7a7 7 0 0 1-14 0z" fill="#9ad858" />
            <path d="M0 2l11 10c-4 3-11 2-11-5z" fill="#44a868" />
            <path d="M2 2l10 9" stroke="#fff" strokeWidth="2" />
          </svg>
          <span className="h-px w-1 bg-[#666]" />
        </button>
        <div className="ml-auto flex items-center gap-1.5 pr-1">
          <Icon name="chevU" className="mr-0.5 size-[7px]" />
          <Icon name="monitor" className="size-[10px]" />
          <Icon name="volume" className="size-[9px]" />
          <Icon name="battery" className="size-[10px]" />
          <Icon name="bell" className="ml-0.5 size-[10px]" />
        </div>
      </div>
    </div>
  );
}

export default function App() {
  return (
    <div className="relative flex min-h-screen flex-col bg-[#f6f6f5] font-['Noto_Sans','Open_Sans',sans-serif] text-[6px] leading-[8px] text-[#222]">
      <TitleBar />
      <MenuBar />
      <StandardBar />
      <PropertyBar />
      <div className="relative flex flex-1">
        <Toolbox />
        <Document />
        <Docker />
        <DockerTabs />
        <ColorBar />

        <div role="tooltip" className="absolute top-[152px] right-0 h-8 w-[152px] border border-[#c4c4c4] bg-[#fcfcfc] pt-0.5 pl-0.5 leading-[9px] shadow">
          <p className="font-bold">Abstand horizontal verteilen</p>
          <p className="text-[#666]">Gleichen horizontalen Abstand zwischen Objekten einfügen.</p>
        </div>
        <svg viewBox="0 0 8 12" className="absolute top-[147px] right-[135px] h-[10px] w-[7px]">
          <path d="M1 1v9l2-2 2 3 1.500-1L5 7h3z" fill="#fff" stroke="#333" strokeWidth=".8" />
        </svg>
        <div className="pointer-events-none absolute top-[104px] right-[77px] h-[112px] w-[118px] rounded-[50%] border-[3px] border-[#c4122c]" />
      </div>
      <StatusBar />
      <Taskbar />

      {/* brand overlay */}
      <div className="pointer-events-none absolute top-2.5 right-[11px] flex w-[68px] flex-col items-center text-[#3c3c3c]">
        <svg viewBox="0 0 36 30" className="h-[30px] w-[36px]" fill="currentColor">
          <path d="M12 13l5.500-5v21H6l-5-6h11zM18.500 7L25 0v23h10l-5 6H18.500z" />
          <path d="M11 19.500L26 6" stroke="#f4f4f4" strokeWidth="1.300" />
        </svg>
        <span className="mt-0.5 font-['Roboto'] text-[12px] leading-[14px] font-medium">JUSTLASER</span>
      </div>
    </div>
  );
}
